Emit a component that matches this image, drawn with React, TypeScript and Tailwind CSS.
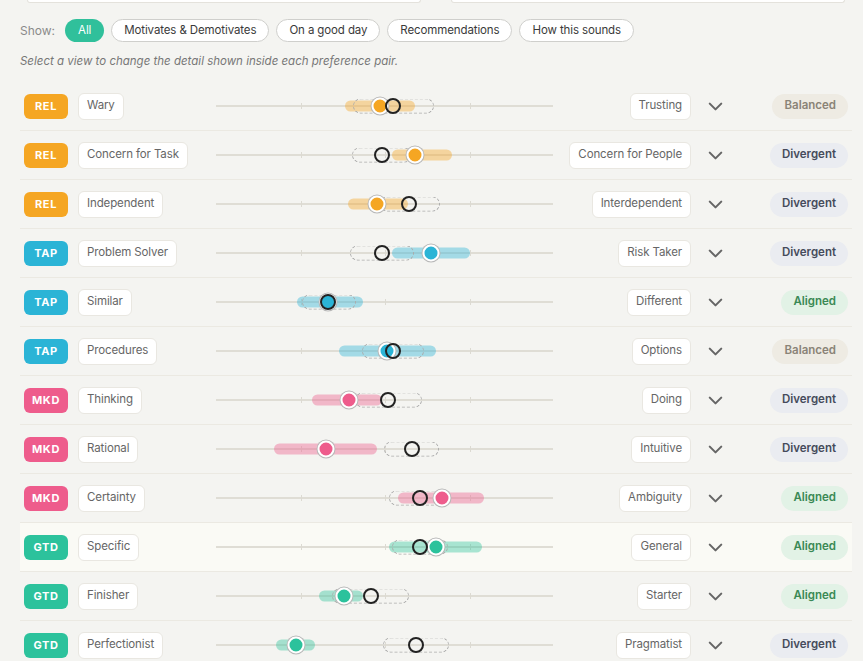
import { ChevronDown } from "lucide-react";

type Group = "REL" | "TAP" | "MKD" | "GTD";
type Status = "Balanced" | "Divergent" | "Aligned";

type Pair = {
  group: Group;
  left: string;
  right: string;
  status: Status;
  band: [number, number];
  dashed: [number, number];
  you: number;
  them: number;
  active?: boolean;
};

// track starts at x=216 on the page, positions below are in page px
const TRACK_X = 216;

const groupStyles: Record<Group, { badge: string; band: string }> = {
  REL: { badge: "bg-[#f5a623]", band: "bg-[#f5a623]/40" },
  TAP: { badge: "bg-[#2bb4d6]", band: "bg-[#2bb4d6]/40" },
  MKD: { badge: "bg-[#ee5c8c]", band: "bg-[#ee5c8c]/40" },
  GTD: { badge: "bg-[#2cc29c]", band: "bg-[#2cc29c]/40" },
};

const statusStyles: Record<Status, string> = {
  Balanced: "bg-[#eeebe3] text-[#8a8377]",
  Divergent: "bg-[#eaecf1] text-[#454b5b]",
  Aligned: "bg-[#e2f2e6] text-[#3b8955]",
};

const pairs: Pair[] = [
  { group: "REL", left: "Wary", right: "Trusting", status: "Balanced", band: [345, 415], dashed: [353, 434], you: 380, them: 393 },
  { group: "REL", left: "Concern for Task", right: "Concern for People", status: "Divergent", band: [392, 452], dashed: [352, 412], you: 415, them: 382 },
  { group: "REL", left: "Independent", right: "Interdependent", status: "Divergent", band: [348, 408], dashed: [380, 440], you: 377, them: 409 },
  { group: "TAP", left: "Problem Solver", right: "Risk Taker", status: "Divergent", band: [392, 470], dashed: [350, 414], you: 431, them: 382 },
  { group: "TAP", left: "Similar", right: "Different", status: "Aligned", band: [297, 363], dashed: [302, 356], you: 328, them: 328 },
  { group: "TAP", left: "Procedures", right: "Options", status: "Balanced", band: [339, 436], dashed: [362, 424], you: 387, them: 393 },
  { group: "MKD", left: "Thinking", right: "Doing", status: "Divergent", band: [312, 382], dashed: [355, 422], you: 349, them: 388 },
  { group: "MKD", left: "Rational", right: "Intuitive", status: "Divergent", band: [274, 377], dashed: [384, 439], you: 326, them: 412 },
  { group: "MKD", left: "Certainty", right: "Ambiguity", status: "Aligned", band: [398, 484], dashed: [389, 451], you: 442, them: 420 },
  { group: "GTD", left: "Specific", right: "General", status: "Aligned", band: [389, 482], dashed: [392, 448], you: 436, them: 420, active: true },
  { group: "GTD", left: "Finisher", right: "Starter", status: "Aligned", band: [319, 363], dashed: [332, 409], you: 344, them: 371 },
  { group: "GTD", left: "Perfectionist", right: "Pragmatist", status: "Divergent", band: [276, 315], dashed: [383, 449], you: 296, them: 416 },
];

const views = ["All", "Motivates & Demotivates", "On a good day", "Recommendations", "How this sounds"];

const Track = ({ pair }: { pair: Pair }) => {
  const s = groupStyles[pair.group];
  const x = (v: number) => v - TRACK_X;

  return (
    <div className="relative h-full w-[337px] shrink-0">
      <div className="absolute left-0 right-0 top-1/2 h-[2px] -translate-y-1/2 bg-[#dfddd5]" />
      {[85, 169, 254].map((t) => (
        <div key={t} className="absolute top-1/2 h-[6px] w-px -translate-y-1/2 bg-[#dcdad2]" style={{ left: t }} />
      ))}
      <div
        className={`absolute top-1/2 h-[11px] -translate-y-1/2 rounded-full ${s.band}`}
        style={{ left: x(pair.band[0]), width: pair.band[1] - pair.band[0] }}
      />
      <div
        className="absolute top-1/2 h-[15px] -translate-y-1/2 rounded-full border border-dashed border-[#ababab]"
        style={{ left: x(pair.dashed[0]), width: pair.dashed[1] - pair.dashed[0] }}
      />
      <div
        className={`absolute top-1/2 h-[17px] w-[17px] -translate-x-1/2 -translate-y-1/2 rounded-full border-2 border-white shadow-[0_0_0_1px_#b8b8b8] ${s.badge}`}
        style={{ left: x(pair.you) }}
      />
      <div
        className="absolute top-1/2 h-[16px] w-[16px] -translate-x-1/2 -translate-y-1/2 rounded-full border-[2.5px] border-[#222]"
        style={{ left: x(pair.them) }}
      />
    </div>
  );
};

const Label = ({ text }: { text: string }) => (
  <span className="flex h-[27px] items-center rounded-[6px] border border-[#e9e7e1] bg-white px-2 text-[11.5px] tracking-[-0.01em] text-[#666]">
    {text}
  </span>
);

const PairRow = ({ pair }: { pair: Pair }) => (
  <div
    className={`flex h-[49px] items-center border-b border-[#ebe9e2] pl-1 pr-1 ${pair.active ? "bg-[#fafaf5]" : ""}`}
  >
    <div className="flex w-[192px] shrink-0 items-center gap-[10px]">
      <span
        className={`flex h-[25px] w-[44px] items-center justify-center rounded-[6px] text-[11px] font-bold tracking-[0.06em] text-white ${groupStyles[pair.group].badge}`}
      >
        {pair.group}
      </span>
      <Label text={pair.left} />
    </div>
    <Track pair={pair} />
    <div className="flex w-[138px] shrink-0 justify-end">
      <Label text={pair.right} />
    </div>
    <ChevronDown size={23} strokeWidth={2.2} className="ml-[13px] shrink-0 text-[#666]" />
    <div className="flex flex-1 justify-end">
      <span className={`flex h-[25px] items-center rounded-full px-[12px] text-[11.5px] font-semibold ${statusStyles[pair.status]}`}>
        {pair.status}
      </span>
    </div>
  </div>
);

export default function App() {
  return (
    <div className="min-h-screen bg-[#f4f4f1] pl-5 pr-[11px] font-['Inter',sans-serif]">
      <div className="flex h-[3px] gap-[30px] px-[7px]">
        <div className="w-[394px] rounded-b-[6px] border-x border-b border-[#e4e2dc] bg-white" />
        <div className="w-[394px] rounded-b-[6px] border-x border-b border-[#e4e2dc] bg-white" />
      </div>

      <div className="mt-4 flex items-center gap-[7px]">
        <span className="mr-[3px] text-[12px] text-[#8a8a8a]">Show:</span>
        {views.map((v) =>
          v === "All" ? (
            <span
              key={v}
              className="flex h-[23px] items-center rounded-full bg-[#30c09b] px-[13px] text-[11.5px] tracking-[-0.01em] text-white"
            >
              {v}
            </span>
          ) : (
            <span
              key={v}
              className="flex h-[23px] items-center rounded-full border border-[#cfcfcc] bg-white px-3 text-[11.5px] tracking-[-0.01em] text-[#3a3a3a]"
            >
              {v}
            </span>
          )
        )}
      </div>

      <p className="mb-[13px] mt-[11px] h-4 text-[11.5px] italic leading-4 text-[#777]">
        Select a view to change the detail shown inside each preference pair.
      </p>

      <div>
        {pairs.map((p) => (
          <PairRow key={p.left} pair={p} />
        ))}
      </div>
    </div>
  );
}
